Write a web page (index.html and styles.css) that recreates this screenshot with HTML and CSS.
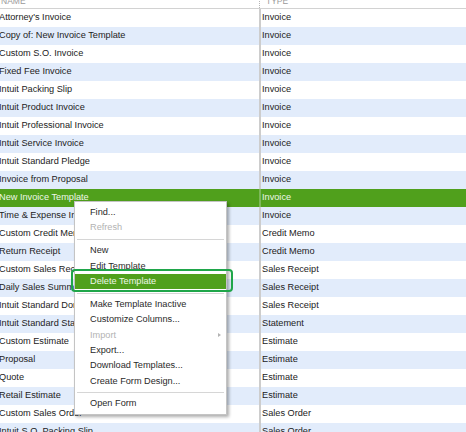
FILE: index.html
```html
<!DOCTYPE html>
<html lang="en">
<head>
<meta charset="utf-8">
<title>Templates</title>
<link rel="stylesheet" href="styles.css">
</head>
<body>
<div class="list">
  <div class="head">
    <span class="h-name">NAME</span>
    <span class="h-type">TYPE</span>
  </div>
  <div class="rows">
    <div class="row"><span class="name">Attorney's Invoice</span><span class="type">Invoice</span></div>
    <div class="row"><span class="name">Copy of: New Invoice Template</span><span class="type">Invoice</span></div>
    <div class="row"><span class="name">Custom S.O. Invoice</span><span class="type">Invoice</span></div>
    <div class="row"><span class="name">Fixed Fee Invoice</span><span class="type">Invoice</span></div>
    <div class="row"><span class="name">Intuit Packing Slip</span><span class="type">Invoice</span></div>
    <div class="row"><span class="name">Intuit Product Invoice</span><span class="type">Invoice</span></div>
    <div class="row"><span class="name">Intuit Professional Invoice</span><span class="type">Invoice</span></div>
    <div class="row"><span class="name">Intuit Service Invoice</span><span class="type">Invoice</span></div>
    <div class="row"><span class="name">Intuit Standard Pledge</span><span class="type">Invoice</span></div>
    <div class="row"><span class="name">Invoice from Proposal</span><span class="type">Invoice</span></div>
    <div class="row selected"><span class="name">New Invoice Template</span><span class="type">Invoice</span></div>
    <div class="row"><span class="name">Time &amp; Expense Invoice</span><span class="type">Invoice</span></div>
    <div class="row"><span class="name">Custom Credit Memo</span><span class="type">Credit Memo</span></div>
    <div class="row"><span class="name">Return Receipt</span><span class="type">Credit Memo</span></div>
    <div class="row"><span class="name">Custom Sales Receipt</span><span class="type">Sales Receipt</span></div>
    <div class="row"><span class="name">Daily Sales Summary</span><span class="type">Sales Receipt</span></div>
    <div class="row"><span class="name">Intuit Standard Donation</span><span class="type">Sales Receipt</span></div>
    <div class="row"><span class="name">Intuit Standard Statement</span><span class="type">Statement</span></div>
    <div class="row"><span class="name">Custom Estimate</span><span class="type">Estimate</span></div>
    <div class="row"><span class="name">Proposal</span><span class="type">Estimate</span></div>
    <div class="row"><span class="name">Quote</span><span class="type">Estimate</span></div>
    <div class="row"><span class="name">Retail Estimate</span><span class="type">Estimate</span></div>
    <div class="row"><span class="name">Custom Sales Order</span><span class="type">Sales Order</span></div>
    <div class="row"><span class="name">Intuit S.O. Packing Slip</span><span class="type">Sales Order</span></div>
  </div>
</div>

<div class="menu">
  <div class="item">Find...</div>
  <div class="item disabled">Refresh</div>
  <div class="sep"></div>
  <div class="item">New</div>
  <div class="item">Edit Template</div>
  <div class="item active">Delete Template</div>
  <div class="sep"></div>
  <div class="item">Make Template Inactive</div>
  <div class="item">Customize Columns...</div>
  <div class="item disabled submenu">Import<span class="arrow"></span></div>
  <div class="item">Export...</div>
  <div class="item">Download Templates...</div>
  <div class="item">Create Form Design...</div>
  <div class="sep"></div>
  <div class="item">Open Form</div>
</div>
<div class="focus-ring"></div>
</body>
</html>
```

FILE: styles.css
```css
html, body {
  margin: 0;
  padding: 0;
}

body {
  width: 466px;
  height: 432px;
  overflow: hidden;
  position: relative;
  background: #ffffff;
  font-family: "Liberation Sans", Arial, sans-serif;
  font-size: 9.2px;
  color: #222222;
}

/* column header, scrolled mostly out of view */
.head {
  height: 8px;
  overflow: hidden;
  display: grid;
  grid-template-columns: 259px 1fr;
  border-bottom: 1px solid #d2d2d2;
  color: #9a9a9a;
  font-size: 8.5px;
  line-height: 10px;
}

.h-name,
.h-type {
  display: block;
  margin-top: -4px;
}

.h-name {
  padding-left: 1px;
}

.h-type {
  padding-left: 6px;
  border-left: 1px dotted #b5b5b5;
}

.rows {
  display: flex;
  flex-direction: column;
}

.row {
  display: grid;
  grid-template-columns: 259px 1fr;
  height: 18px;
  line-height: 16px;
  background: #ffffff;
}

.row:nth-child(even) {
  background: #e2ecfb;
}

.name {
  margin-left: -1px;
  white-space: nowrap;
  overflow: hidden;
}

.type {
  border-left: 2px solid #cdcdcd;
  padding-left: 1px;
  white-space: nowrap;
}

.row.selected {
  background: #50a01c;
  color: #eef7e8;
}

.row.selected .type {
  border-left-color: #7db85a;
}

/* context menu */
.menu {
  position: absolute;
  left: 74px;
  top: 201px;
  width: 153px;
  box-sizing: border-box;
  padding: 3px 0 2px;
  background: #ffffff;
  border: 1px solid #c4c4c4;
  box-shadow: 2px 2px 3px rgba(0, 0, 0, 0.32);
  display: flex;
  flex-direction: column;
  color: #2a2a2a;
}

.item {
  height: 15.4px;
  line-height: 15.4px;
  padding-left: 15px;
  padding-right: 5px;
  white-space: nowrap;
}

.item.disabled {
  color: #b3b3b3;
}

.item.active {
  background: #50a01c;
  color: #eef7e8;
}

.item.submenu {
  display: flex;
  justify-content: space-between;
  align-items: center;
}

.arrow {
  width: 0;
  height: 0;
  border-left: 3px solid #b3b3b3;
  border-top: 2.5px solid transparent;
  border-bottom: 2.5px solid transparent;
}

.sep {
  height: 7.4px;
  display: flex;
  align-items: center;
  padding: 0 2px;
}

.sep::before {
  content: "";
  flex: 1;
  height: 1px;
  background: #d6d6d6;
}

/* keyboard focus outline around the highlighted command */
.focus-ring {
  position: absolute;
  left: 71px;
  top: 269px;
  width: 162px;
  height: 23px;
  box-sizing: border-box;
  border: 2px solid #1fa64a;
  border-radius: 4px;
}
```
